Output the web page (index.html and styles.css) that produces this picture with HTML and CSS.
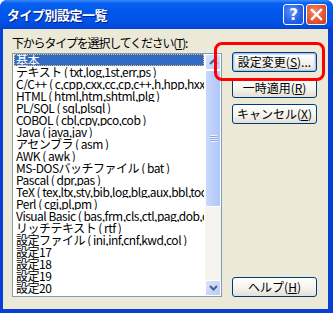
FILE: index.html
```html
<!DOCTYPE html>
<html lang="ja">

<head>
    <meta charset="UTF-8">
    <title>タイプ別設定一覧</title>
    <link rel="stylesheet" href="styles.css">
</head>

<body>

    <div class="window">
        <div class="titlebar">
            <span class="title">タイプ別設定一覧</span>
            <div class="caption-buttons">
                <div class="cap-btn help">?</div>
                <div class="cap-btn close">
                    <svg width="13" height="13" viewBox="0 0 13 13">
                        <path d="M2 2 L11 11 M11 2 L2 11" stroke="#fff" stroke-width="2.4" stroke-linecap="square" />
                    </svg>
                </div>
            </div>
        </div>

        <div class="dialog">
            <div class="left">
                <div class="caption">下からタイプを選択してください(<u>T</u>):</div>
                <div class="listbox">
                    <ul class="items">
                        <li class="selected"><span>基本</span></li>
                        <li>テキスト ( txt,log,1st,err,ps )</li>
                        <li>C/C++ ( c,cpp,cxx,cc,cp,c++,h,hpp,hxx )</li>
                        <li>HTML ( html,htm,shtml,plg )</li>
                        <li>PL/SQL ( sql,plsql )</li>
                        <li>COBOL ( cbl,cpy,pco,cob )</li>
                        <li>Java ( java,jav )</li>
                        <li>アセンブラ ( asm )</li>
                        <li>AWK ( awk )</li>
                        <li>MS-DOSバッチファイル ( bat )</li>
                        <li>Pascal ( dpr,pas )</li>
                        <li>TeX ( tex,ltx,sty,bib,log,blg,aux,bbl,toc )</li>
                        <li>Perl ( cgi,pl,pm )</li>
                        <li>Visual Basic ( bas,frm,cls,ctl,pag,dob,dsr )</li>
                        <li>リッチテキスト ( rtf )</li>
                        <li>設定ファイル ( ini,inf,cnf,kwd,col )</li>
                        <li>設定17</li>
                        <li>設定18</li>
                        <li>設定19</li>
                        <li>設定20</li>
                    </ul>
                    <div class="scrollbar">
                        <div class="sb-btn">
                            <svg width="9" height="6" viewBox="0 0 9 6">
                                <path d="M1 5 L4.5 1.5 L8 5" fill="none" stroke="#4d6185" stroke-width="2" />
                            </svg>
                        </div>
                        <div class="thumb">
                            <div class="grip"></div>
                        </div>
                        <div class="track"></div>
                        <div class="sb-btn">
                            <svg width="9" height="6" viewBox="0 0 9 6">
                                <path d="M1 1 L4.5 4.5 L8 1" fill="none" stroke="#4d6185" stroke-width="2" />
                            </svg>
                        </div>
                    </div>
                </div>
            </div>

            <div class="right">
                <button class="btn default">設定変更(<u>S</u>)...</button>
                <button class="btn">一時適用(<u>R</u>)</button>
                <button class="btn">キャンセル(<u>X</u>)</button>
                <button class="btn help-btn">ヘルプ(<u>H</u>)</button>
            </div>
        </div>

        <div class="marker"></div>
    </div>

</body>

</html>
```

FILE: styles.css
```css
body {
    margin: 0;
    font-family: "Noto Sans CJK JP", sans-serif;
    font-size: 12px;
}

.window {
    position: relative;
    width: 333px;
    height: 313px;
    background: #0840d6;
    border-radius: 7px 7px 0 0;
    display: flex;
    flex-direction: column;
    overflow: hidden;
}

.titlebar {
    height: 29px;
    display: flex;
    align-items: center;
    justify-content: space-between;
    padding: 0 6px 0 7px;
    background: linear-gradient(#3b8cff 0px, #0a62f0 3px, #0058ee 10px, #0054e6 20px, #0049d8 28px, #003fc8 29px);
    box-sizing: border-box;
}

.title {
    color: #fff;
    font-weight: bold;
    font-size: 13px;
    text-shadow: 1px 1px #0a1883;
    letter-spacing: -0.5px;
}

.caption-buttons {
    display: flex;
    gap: 2px;
}

.cap-btn {
    width: 21px;
    height: 21px;
    box-sizing: border-box;
    border: 1px solid #fff;
    border-radius: 3px;
    display: flex;
    align-items: center;
    justify-content: center;
    color: #fff;
    font-family: "DejaVu Sans", sans-serif;
    font-weight: bold;
    font-size: 15px;
}

.help {
    background: radial-gradient(circle at 40% 35%, #5b93ff, #2460e8 60%, #1a4fd8);
}

.close {
    background: radial-gradient(circle at 40% 35%, #f08a6a, #e0532e 60%, #c93d1a);
}

.dialog {
    flex: 1;
    margin: 0 5px 4px 3px;
    background: #ece9d8;
    display: flex;
    gap: 10px;
    padding: 7px 11px 12px 9px;
}

.left {
    display: flex;
    flex-direction: column;
}

.caption {
    line-height: 14px;
    margin-bottom: 3px;
    letter-spacing: -1.2px;
}

.listbox {
    width: 208px;
    height: 242px;
    border: 1px solid #7f9db9;
    background: #fff;
    display: flex;
}

.items {
    list-style: none;
    margin: 0;
    padding: 0 1px;
    flex: 1;
    overflow: hidden;
}

.items li {
    height: 12px;
    line-height: 12px;
    padding-left: 2px;
    white-space: nowrap;
    overflow: hidden;
    letter-spacing: -0.5px;
}

.items li.selected {
    background: #316ac5;
    color: #fff;
    outline: 1px dotted #f0c060;
    outline-offset: -1px;
}

.scrollbar {
    width: 16px;
    display: flex;
    flex-direction: column;
    background: #f4f3ee;
}

.sb-btn {
    height: 16px;
    box-sizing: border-box;
    border: 1px solid #fff;
    border-radius: 2px;
    background: linear-gradient(135deg, #d8e4fc, #b8cdf8);
    display: flex;
    align-items: center;
    justify-content: center;
}

.thumb {
    height: 137px;
    box-sizing: border-box;
    border: 1px solid #fff;
    border-radius: 2px;
    background: linear-gradient(90deg, #c9d8fc, #bccffb 50%, #b0c6f8);
    display: flex;
    align-items: center;
    justify-content: center;
}

.grip {
    width: 7px;
    height: 7px;
    background: repeating-linear-gradient(#eef3fe 0 1px, #8ca6de 1px 2px);
}

.track {
    flex: 1;
}

.right {
    display: flex;
    flex-direction: column;
    gap: 6px;
    padding-top: 16px;
}

.btn {
    width: 85px;
    height: 20px;
    border: 1px solid #003c74;
    border-radius: 3px;
    background: linear-gradient(#ffffff, #f3f2ec 60%, #e3e0d4);
    font-family: "Noto Sans CJK JP", sans-serif;
    font-size: 12px;
    line-height: 16px;
    padding: 0;
    color: #000;
}

.btn.default {
    box-shadow: inset 0 0 0 1px #a8c4f0, inset 0 0 0 2px #cfe0fb;
}

.help-btn {
    margin-top: auto;
}

.marker {
    position: absolute;
    left: 214px;
    top: 42px;
    width: 111px;
    height: 39px;
    box-sizing: border-box;
    border: 3px solid #ff0000;
    border-radius: 8px;
}
```
